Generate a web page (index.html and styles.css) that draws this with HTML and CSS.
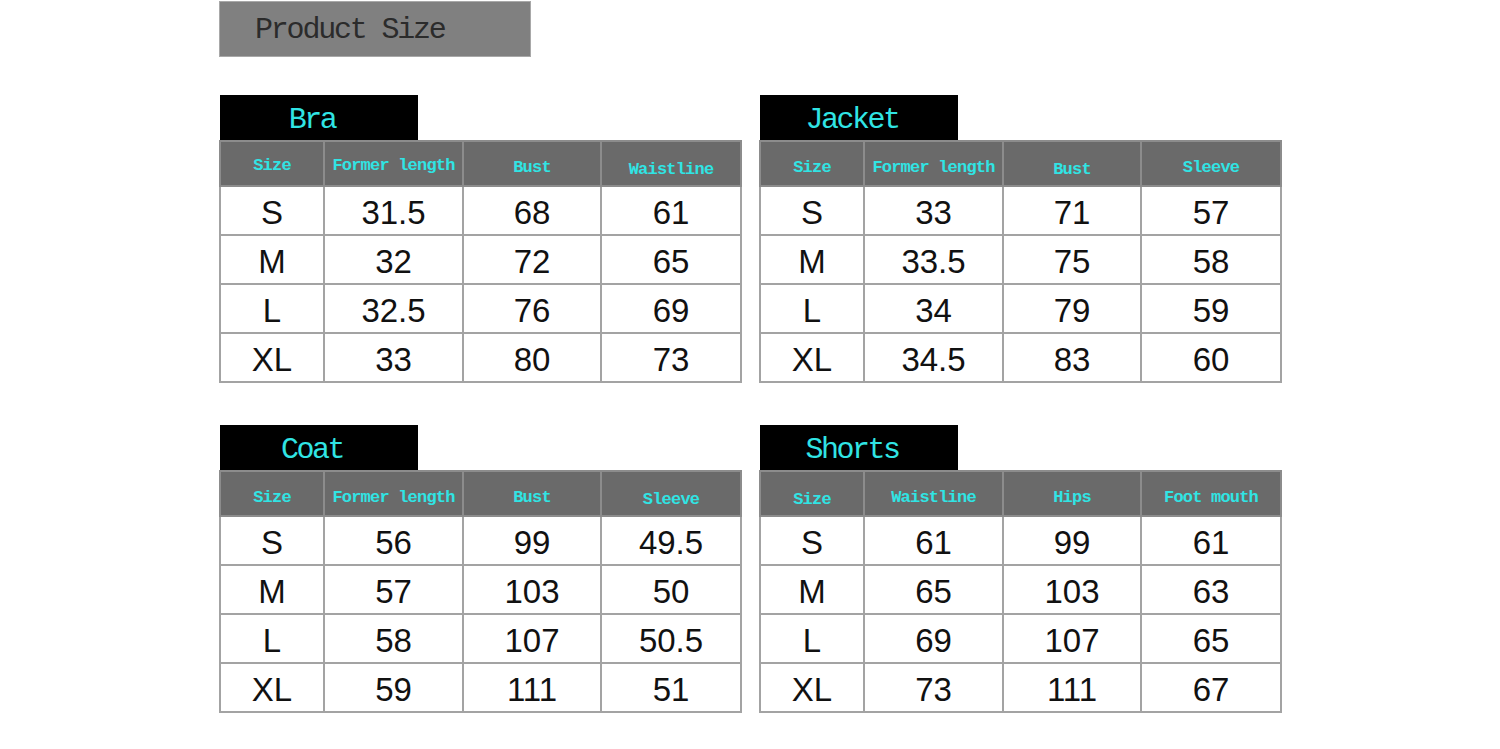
FILE: index.html
```html
<!DOCTYPE html>
<html>
<head>
<meta charset="utf-8">
<link rel="stylesheet" href="styles.css">
</head>
<body>
<div class="page">
  <div class="title">Product Size</div>
  <div class="grid">
    <section class="block">
      <div class="tab"><span>Bra</span></div>
      <table class="chart">
        <colgroup><col class="c1"><col class="c2"><col class="c3"><col class="c4"></colgroup>
        <thead><tr><th class="up">Size</th><th class="up">Former length</th><th>Bust</th><th class="down">Waistline</th></tr></thead>
        <tbody>
          <tr><td>S</td><td>31.5</td><td>68</td><td>61</td></tr>
          <tr><td>M</td><td>32</td><td>72</td><td>65</td></tr>
          <tr><td>L</td><td>32.5</td><td>76</td><td>69</td></tr>
          <tr><td>XL</td><td>33</td><td>80</td><td>73</td></tr>
        </tbody>
      </table>
    </section>
    <section class="block">
      <div class="tab"><span>Jacket</span></div>
      <table class="chart">
        <colgroup><col class="c1"><col class="c2"><col class="c3"><col class="c4"></colgroup>
        <thead><tr><th>Size</th><th>Former length</th><th class="down">Bust</th><th>Sleeve</th></tr></thead>
        <tbody>
          <tr><td>S</td><td>33</td><td>71</td><td>57</td></tr>
          <tr><td>M</td><td>33.5</td><td>75</td><td>58</td></tr>
          <tr><td>L</td><td>34</td><td>79</td><td>59</td></tr>
          <tr><td>XL</td><td>34.5</td><td>83</td><td>60</td></tr>
        </tbody>
      </table>
    </section>
    <section class="block">
      <div class="tab"><span>Coat</span></div>
      <table class="chart">
        <colgroup><col class="c1"><col class="c2"><col class="c3"><col class="c4"></colgroup>
        <thead><tr><th>Size</th><th>Former length</th><th>Bust</th><th class="down">Sleeve</th></tr></thead>
        <tbody>
          <tr><td>S</td><td>56</td><td>99</td><td>49.5</td></tr>
          <tr><td>M</td><td>57</td><td>103</td><td>50</td></tr>
          <tr><td>L</td><td>58</td><td>107</td><td>50.5</td></tr>
          <tr><td>XL</td><td>59</td><td>111</td><td>51</td></tr>
        </tbody>
      </table>
    </section>
    <section class="block">
      <div class="tab"><span>Shorts</span></div>
      <table class="chart">
        <colgroup><col class="c1"><col class="c2"><col class="c3"><col class="c4"></colgroup>
        <thead><tr><th class="down">Size</th><th>Waistline</th><th>Hips</th><th>Foot mouth</th></tr></thead>
        <tbody>
          <tr><td>S</td><td>61</td><td>99</td><td>61</td></tr>
          <tr><td>M</td><td>65</td><td>103</td><td>63</td></tr>
          <tr><td>L</td><td>69</td><td>107</td><td>65</td></tr>
          <tr><td>XL</td><td>73</td><td>111</td><td>67</td></tr>
        </tbody>
      </table>
    </section>
  </div>
</div>
</body>
</html>
```

FILE: styles.css
```css
html, body {
  margin: 0;
  padding: 0;
  background: #ffffff;
}

.page {
  width: 1500px;
  height: 749px;
  padding: 1px 0 0 219px;
  box-sizing: border-box;
}

.title {
  width: 312px;
  height: 56px;
  box-sizing: border-box;
  background: #808080;
  border: 1px solid #a8a8a8;
  font-family: "Liberation Mono", "DejaVu Sans Mono", monospace;
  font-size: 30px;
  letter-spacing: -2.2px;
  color: #2b2b2b;
  line-height: 56px;
  padding-left: 35px;
}

.grid {
  display: grid;
  grid-template-columns: 522px 522px;
  column-gap: 18px;
  row-gap: 42px;
  margin-top: 38px;
}

.block {
  display: flex;
  flex-direction: column;
}

.tab {
  width: 198px;
  height: 45px;
  margin-left: 1px;
  background: #000000;
  color: #30e4e4;
  font-family: "Liberation Mono", "DejaVu Sans Mono", monospace;
  font-size: 30px;
  letter-spacing: -2.5px;
  display: flex;
  align-items: center;
  justify-content: center;
  padding-right: 14px;
  padding-top: 4px;
  box-sizing: border-box;
}

.chart {
  border-collapse: collapse;
  table-layout: fixed;
  width: 522px;
}

.c1 { width: 104px; }
.c2 { width: 139px; }
.c3 { width: 138px; }
.c4 { width: 140px; }

.chart th {
  height: 45px;
  padding: 7px 0 0 0;
  box-sizing: border-box;
  background: #6a6a6a;
  color: #30e4e4;
  font-family: "Liberation Mono", "DejaVu Sans Mono", monospace;
  font-size: 17px;
  font-weight: bold;
  text-align: center;
  border: 2px solid #8c8c8c;
  white-space: nowrap;
  letter-spacing: -0.8px;
}

.chart th.up { padding-top: 3px; }
.chart th.down { padding-top: 11px; }

.chart td {
  height: 49px;
  padding: 5px 0 0 0;
  box-sizing: border-box;
  border: 2px solid #a3a3a3;
  text-align: center;
  font-family: "Liberation Sans", Arial, sans-serif;
  font-size: 33px;
  color: #111111;
  letter-spacing: 0;
}
```
